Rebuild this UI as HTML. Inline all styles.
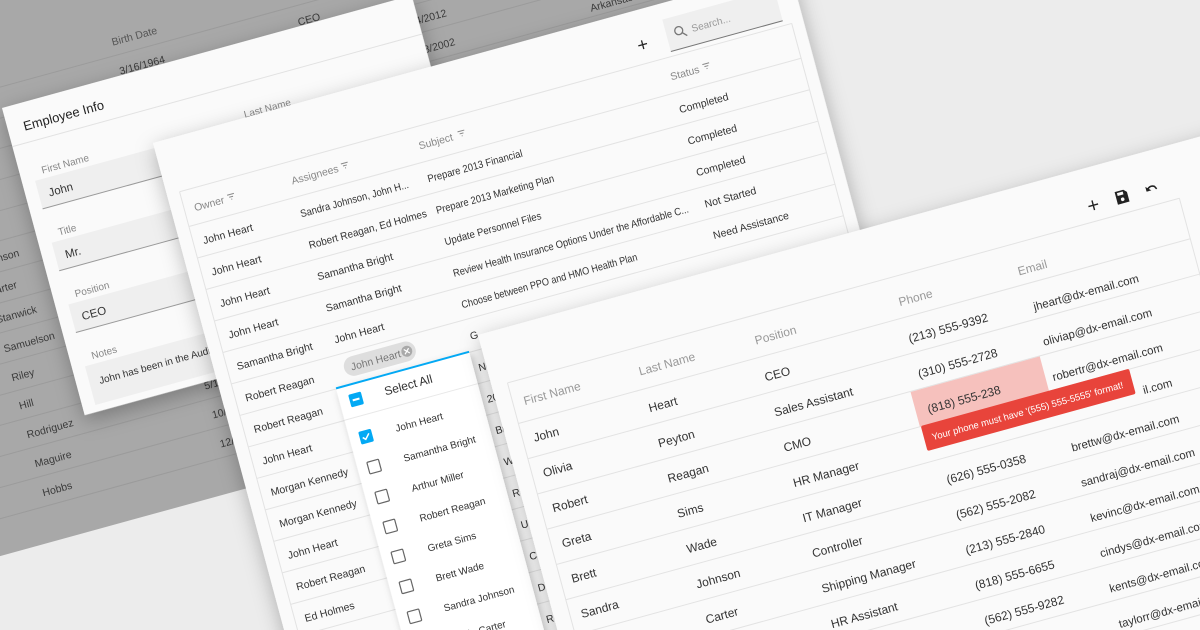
<!DOCTYPE html>
<html><head><meta charset="utf-8"><style>
html,body{margin:0;padding:0;width:1200px;height:630px;overflow:hidden;background:#ececec;}
svg{display:block;font-family:"Liberation Sans",Arial,sans-serif;}
</style></head><body>
<svg width="1200" height="630" viewBox="0 0 1200 630" xmlns="http://www.w3.org/2000/svg">
<defs>
<filter id="sh" x="-20%" y="-20%" width="140%" height="140%"><feDropShadow dx="0" dy="6" stdDeviation="10" flood-color="#000" flood-opacity="0.28"/></filter>
<filter id="sh2" x="-30%" y="-20%" width="160%" height="140%"><feDropShadow dx="2" dy="3" stdDeviation="4" flood-color="#000" flood-opacity="0.25"/></filter>
</defs>
<rect width="1200" height="630" fill="#ececec"/>

<g transform="matrix(0.964 -0.265 0.26 0.966 0 0)" font-size="10.5" fill="#3a3a3a">
<rect x="-300" y="-400" width="1000" height="936" fill="#a8a8a8"/>
<g stroke="#9b9b9b" stroke-width="1">
<line x1="-300" y1="84" x2="700" y2="84"/><line x1="-300" y1="114" x2="700" y2="114"/><line x1="-300" y1="143" x2="700" y2="143"/><line x1="-300" y1="173" x2="700" y2="173"/><line x1="-300" y1="203" x2="700" y2="203"/><line x1="-300" y1="232" x2="700" y2="232"/><line x1="-300" y1="262" x2="700" y2="262"/><line x1="-300" y1="292" x2="700" y2="292"/><line x1="-300" y1="321" x2="700" y2="321"/><line x1="-300" y1="351" x2="700" y2="351"/><line x1="-300" y1="381" x2="700" y2="381"/><line x1="-300" y1="410" x2="700" y2="410"/><line x1="-300" y1="440" x2="700" y2="440"/><line x1="-300" y1="470" x2="700" y2="470"/><line x1="-300" y1="500" x2="700" y2="500"/>
</g>
<text x="97" y="74" fill="#555">Birth Date</text>
<text x="97" y="104">3/16/1964</text>
<text x="282" y="104">CEO</text>
<text x="376" y="134">11/24/2012</text>
<text x="376" y="164">10/18/2002</text>
<text x="568" y="168">Arkansas</text>
<text x="-87" y="252">Johnson</text>
<text x="-87" y="282">Carter</text>
<text x="-87" y="311">Stanwick</text>
<text x="-87" y="341">Samuelson</text>
<text x="-87" y="371">Riley</text>
<text x="-87" y="400">Hill</text>
<text x="-87" y="430">Rodriguez</text>
<text x="-87" y="460">Maguire</text>
<text x="-87" y="490">Hobbs</text>
<text x="97" y="430">5/17/1971</text>
<text x="97" y="460">10/19/1978</text>
<text x="97" y="490">12/6/1985</text>
</g>

<g transform="matrix(0.964 -0.265 0.26 0.966 2 108)" filter="url(#sh)">
<rect x="0" y="0" width="425" height="318" fill="#fafafa"/>
</g>
<g transform="matrix(0.964 -0.265 0.26 0.966 2 108)">
<text x="16" y="28" font-size="13" fill="#222">Employee Info</text>
<line x1="0" y1="40" x2="425" y2="40" stroke="#e2e2e2"/>
<g font-size="10" fill="#888"><text x="22" y="74">First Name</text><text x="232" y="74">Last Name</text>
<text x="22" y="138">Title</text><text x="22" y="202">Position</text><text x="22" y="266">Notes</text></g>
<g fill="#efefef"><rect x="13" y="79" width="205" height="29"/><rect x="13" y="143" width="205" height="29"/><rect x="13" y="207" width="205" height="29"/><rect x="13" y="271" width="205" height="40"/></g>
<g stroke="#9a9a9a"><line x1="13" y1="108" x2="218" y2="108"/><line x1="13" y1="172" x2="218" y2="172"/><line x1="13" y1="236" x2="218" y2="236"/></g>
<g font-size="11.5" fill="#333"><text x="23" y="98">John</text><text x="23" y="162">Mr.</text><text x="23" y="226">CEO</text><text x="23" y="292" font-size="10">John has been in the Audio/Video industry since 1990.</text></g>
</g>

<g transform="matrix(0.964 -0.265 0.26 0.966 153 143)" filter="url(#sh)">
<rect x="0" y="0" width="660" height="800" fill="#fafafa"/>
</g>
<g transform="matrix(0.964 -0.265 0.26 0.966 153 143)" font-size="10.5" fill="#333">
<g stroke="#222" stroke-width="1.3"><line x1="494" y1="35" x2="503" y2="35"/><line x1="498.5" y1="30.5" x2="498.5" y2="39.5"/></g>
<rect x="524" y="16" width="116" height="33" fill="#efefef"/>
<line x1="524" y1="49" x2="640" y2="49" stroke="#777"/>
<circle cx="537" cy="31" r="4" fill="none" stroke="#777" stroke-width="1.3"/><line x1="540" y1="34" x2="544" y2="38" stroke="#777" stroke-width="1.4"/>
<text x="550" y="36" font-size="10" fill="#999">Search...</text>
<g stroke="#e3e3e3"><line x1="13" y1="54" x2="648" y2="54"/><line x1="13" y1="54" x2="13" y2="800"/><line x1="648" y1="54" x2="648" y2="800"/>
<line x1="13" y1="90" x2="648" y2="90"/><line x1="13" y1="122.6" x2="648" y2="122.6"/><line x1="13" y1="155.2" x2="648" y2="155.2"/><line x1="13" y1="187.8" x2="648" y2="187.8"/><line x1="13" y1="220.4" x2="648" y2="220.4"/><line x1="13" y1="253" x2="648" y2="253"/><line x1="13" y1="285.6" x2="648" y2="285.6"/><line x1="13" y1="318.2" x2="648" y2="318.2"/><line x1="13" y1="350.8" x2="648" y2="350.8"/><line x1="13" y1="383.4" x2="648" y2="383.4"/><line x1="13" y1="416" x2="648" y2="416"/><line x1="13" y1="448.6" x2="648" y2="448.6"/><line x1="13" y1="481.2" x2="648" y2="481.2"/><line x1="13" y1="513.8" x2="648" y2="513.8"/><line x1="13" y1="546.4" x2="648" y2="546.4"/></g>
<g fill="#888"><text x="23" y="77">Owner</text><text x="124" y="77">Assignees</text><text x="256" y="77">Subject</text><text x="517" y="77">Status</text></g>
<g stroke="#888" stroke-width="1"><path d="M58 70h7M59.5 72.5h4M61 75h1"/><path d="M176 70h7M177.5 72.5h4M179 75h1"/><path d="M297 70h7M298.5 72.5h4M300 75h1"/><path d="M551 70h7M552.5 72.5h4M554 75h1"/></g>
<text x="23" y="111">John Heart</text><text x="23" y="143.6">John Heart</text><text x="23" y="176.2">John Heart</text><text x="23" y="208.8">John Heart</text><text x="23" y="241.4">Samantha Bright</text><text x="23" y="274">Robert Reagan</text><text x="23" y="306.6">Robert Reagan</text><text x="23" y="339.2">John Heart</text><text x="23" y="371.8">Morgan Kennedy</text><text x="23" y="404.4">Morgan Kennedy</text><text x="23" y="437">John Heart</text><text x="23" y="469.6">Robert Reagan</text><text x="23" y="502.2">Ed Holmes</text><text x="23" y="534.8">Ed Holmes</text>
<text x="124" y="111" textLength="112" lengthAdjust="spacingAndGlyphs">Sandra Johnson, John H...</text><text x="124" y="143.6" textLength="122" lengthAdjust="spacingAndGlyphs">Robert Reagan, Ed Holmes</text><text x="124" y="176.2">Samantha Bright</text><text x="124" y="208.8">Samantha Bright</text><text x="124" y="241.4">John Heart</text>
<text x="256" y="111" textLength="98" lengthAdjust="spacingAndGlyphs">Prepare 2013 Financial</text><text x="256" y="143.6" textLength="122" lengthAdjust="spacingAndGlyphs">Prepare 2013 Marketing Plan</text><text x="256" y="176.2" textLength="100" lengthAdjust="spacingAndGlyphs">Update Personnel Files</text><text x="256" y="208.8" textLength="244" lengthAdjust="spacingAndGlyphs">Review Health Insurance Options Under the Affordable C...</text><text x="256" y="241.4" textLength="182" lengthAdjust="spacingAndGlyphs">Choose between PPO and HMO Health Plan</text><text x="256" y="274">G</text><text x="256" y="306.6">New Brochures</text><text x="256" y="339.2">2013 Brochure Designs</text><text x="256" y="371.8">Brochure Design Review</text><text x="256" y="404.4">Website Re-Design Plan</text><text x="256" y="437">Rollout of New Website</text><text x="256" y="469.6">Update Sales Strategy</text><text x="256" y="502.2">Create 2012 Sales Report</text><text x="256" y="534.8">Direct vs Online Sales</text><text x="256" y="567.4">Review 2012 Sales Report</text>
<text x="517" y="111">Completed</text><text x="517" y="143.6">Completed</text><text x="517" y="176.2">Completed</text><text x="517" y="208.8">Not Started</text><text x="517" y="241.4">Need Assistance</text>
<rect x="113" y="254" width="137" height="30" fill="#fafafa"/>
<rect x="126" y="258" width="74" height="20" rx="10" fill="#dedede"/>
<text x="133" y="272" font-size="10.5" fill="#777">John Heart</text>
<circle cx="191" cy="268" r="5.5" fill="#a9a9a9"/><path d="M188.5 265.5l5 5M193.5 265.5l-5 5" stroke="#fff" stroke-width="1.2"/>
<g filter="url(#sh2)"><rect x="113" y="285" width="138" height="520" fill="#fff"/></g>
<line x1="113" y1="285" x2="251" y2="285" stroke="#03a9f4" stroke-width="2"/>
<line x1="113" y1="318" x2="251" y2="318" stroke="#e8e8e8"/>
<rect x="123" y="294.5" width="13" height="13" rx="1.5" fill="#03a9f4"/><line x1="126" y1="301" x2="133" y2="301" stroke="#fff" stroke-width="2"/>
<text x="159" y="305" font-size="12">Select All</text>
<rect x="123" y="333" width="13" height="13" rx="1.5" fill="#03a9f4"/><path d="M126 339.5l2.5 2.5 4.5-5" stroke="#fff" stroke-width="1.5" fill="none"/>
<g fill="none" stroke="#666" stroke-width="1.2"><rect x="123.5" y="364.5" width="12" height="12" rx="1"/><rect x="123.5" y="395.5" width="12" height="12" rx="1"/><rect x="123.5" y="426.5" width="12" height="12" rx="1"/><rect x="123.5" y="457.5" width="12" height="12" rx="1"/><rect x="123.5" y="488.5" width="12" height="12" rx="1"/><rect x="123.5" y="519.5" width="12" height="12" rx="1"/><rect x="123.5" y="550.5" width="12" height="12" rx="1"/></g>
<g font-size="10"><text x="160" y="343">John Heart</text><text x="160" y="374">Samantha Bright</text><text x="160" y="405">Arthur Miller</text><text x="160" y="436">Robert Reagan</text><text x="160" y="467">Greta Sims</text><text x="160" y="498">Brett Wade</text><text x="160" y="529">Sandra Johnson</text><text x="160" y="560">Kevin Carter</text></g>
</g>

<g transform="matrix(0.964 -0.265 0.26 0.966 478 335)" filter="url(#sh)">
<rect x="0" y="0" width="900" height="600" fill="#fafafa"/>
</g>
<g transform="matrix(0.964 -0.265 0.26 0.966 478 335)" font-size="12" fill="#333">
<g stroke="#222" stroke-width="1.4"><line x1="623" y1="38" x2="633" y2="38"/><line x1="628" y1="33" x2="628" y2="43"/></g>
<path d="M652 31h9l3 3v10h-12z" fill="#222"/><rect x="654" y="32.5" width="6" height="3" fill="#fafafa"/><circle cx="658" cy="40" r="1.8" fill="#fafafa"/>
<path d="M684 39c1-4 5-5 8-3l1.5 3" fill="none" stroke="#222" stroke-width="1.6"/><path d="M683 34v5h5z" fill="#222"/>
<g stroke="#e3e3e3"><line x1="16" y1="54" x2="713" y2="54"/><line x1="16" y1="54" x2="16" y2="600"/><line x1="713" y1="54" x2="713" y2="600"/>
<line x1="16" y1="96" x2="713" y2="96"/><line x1="16" y1="132.5" x2="713" y2="132.5"/><line x1="16" y1="169" x2="713" y2="169"/><line x1="16" y1="205.5" x2="713" y2="205.5"/><line x1="16" y1="242" x2="713" y2="242"/><line x1="16" y1="278.5" x2="713" y2="278.5"/><line x1="16" y1="315" x2="713" y2="315"/><line x1="16" y1="351.5" x2="713" y2="351.5"/><line x1="16" y1="388" x2="713" y2="388"/><line x1="16" y1="424.5" x2="713" y2="424.5"/><line x1="16" y1="461" x2="713" y2="461"/><line x1="16" y1="497.5" x2="713" y2="497.5"/></g>
<g fill="#999"><text x="27" y="80">First Name</text><text x="146" y="82">Last Name</text><text x="266" y="83">Position</text><text x="415" y="84">Phone</text><text x="538" y="86">Email</text></g>
<text x="27" y="118">John</text><text x="27" y="154.5">Olivia</text><text x="27" y="191">Robert</text><text x="27" y="227.5">Greta</text><text x="27" y="264">Brett</text><text x="27" y="300.5">Sandra</text><text x="27" y="337">Kevin</text><text x="27" y="373.5">Cindy</text><text x="27" y="410">Kent</text><text x="27" y="446.5">Taylor</text>
<text x="146" y="120">Heart</text><text x="146" y="156.5">Peyton</text><text x="146" y="193">Reagan</text><text x="146" y="229.5">Sims</text><text x="146" y="266">Wade</text><text x="146" y="302.5">Johnson</text><text x="146" y="339">Carter</text><text x="146" y="375.5">Stanwick</text><text x="146" y="412">Samuelson</text><text x="146" y="448.5">Riley</text>
<text x="266" y="121">CEO</text><text x="266" y="157.5">Sales Assistant</text><text x="266" y="194">CMO</text><text x="266" y="230.5">HR Manager</text><text x="266" y="267">IT Manager</text><text x="266" y="303.5">Controller</text><text x="266" y="340">Shipping Manager</text><text x="266" y="376.5">HR Assistant</text><text x="266" y="413">Ombudsman</text><text x="266" y="449.5">Network Admin</text>
<rect x="403" y="169.5" width="134" height="36" fill="#f6c1bd"/>
<text x="415" y="122">(213) 555-9392</text><text x="415" y="158.5">(310) 555-2728</text><text x="415" y="195">(818) 555-238</text><text x="415" y="268">(626) 555-0358</text><text x="415" y="304.5">(562) 555-2082</text><text x="415" y="341">(213) 555-2840</text><text x="415" y="377.5">(818) 555-6655</text><text x="415" y="414">(562) 555-9282</text><text x="415" y="450.5">(310) 555-7276</text>
<g font-size="11.5"><text x="544" y="124">jheart@dx-email.com</text><text x="544" y="160.5">oliviap@dx-email.com</text><text x="544" y="197">robertr@dx-email.com</text><text x="628" y="233.5">il.com</text><text x="544" y="270">brettw@dx-email.com</text><text x="544" y="306.5">sandraj@dx-email.com</text><text x="544" y="343">kevinc@dx-email.com</text><text x="544" y="379.5">cindys@dx-email.com</text><text x="544" y="416">kents@dx-email.com</text><text x="544" y="452.5">taylorr@dx-email.com</text></g>
<rect x="404" y="205" width="216" height="26" rx="2" fill="#e8443b"/>
<text x="412" y="222" font-size="9.5" fill="#fff">Your phone must have '(555) 555-5555' format!</text>
</g>
</svg>
</body></html>
